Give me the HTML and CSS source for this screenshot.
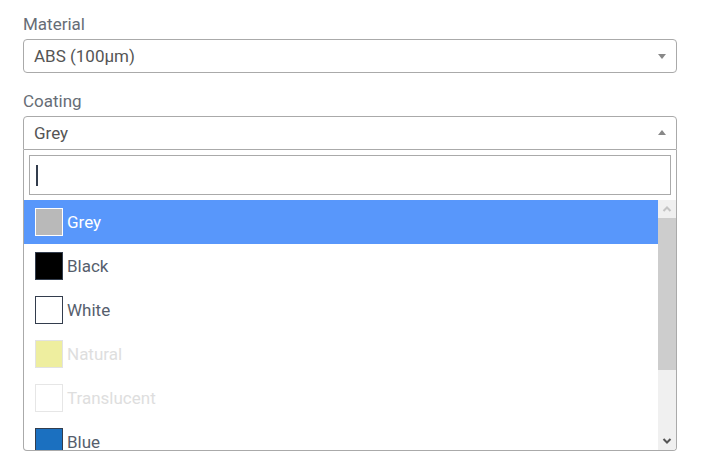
FILE: index.html
```html
<!DOCTYPE html>
<html>
<head>
<meta charset="utf-8">
<link rel="stylesheet" href="styles.css">
</head>
<body>
<div class="form">
  <div class="field">
    <label class="label">Material</label>
    <div class="select">
      <span class="value">ABS (100µm)</span>
      <span class="arrow down"></span>
    </div>
  </div>
  <div class="field">
    <label class="label">Coating</label>
    <div class="select open">
      <span class="value">Grey</span>
      <span class="arrow up"></span>
    </div>
    <div class="dropdown">
      <div class="search"><span class="caret"></span></div>
      <div class="results">
        <ul class="options">
          <li class="option active"><span class="swatch sw-grey"></span>Grey</li>
          <li class="option"><span class="swatch sw-black"></span>Black</li>
          <li class="option"><span class="swatch sw-white"></span>White</li>
          <li class="option disabled"><span class="swatch sw-natural"></span>Natural</li>
          <li class="option disabled"><span class="swatch sw-trans"></span>Translucent</li>
          <li class="option"><span class="swatch sw-blue"></span>Blue</li>
        </ul>
        <div class="scrollbar">
          <div class="sb-btn"><svg width="10" height="6" viewBox="0 0 10 6"><path d="M1.5 5 L5 1.5 L8.5 5" fill="none" stroke="#c4c4c4" stroke-width="2"/></svg></div>
          <div class="sb-thumb"></div>
          <div class="sb-track"></div>
          <div class="sb-btn"><svg width="10" height="6" viewBox="0 0 10 6"><path d="M1.5 1 L5 4.5 L8.5 1" fill="none" stroke="#555" stroke-width="2"/></svg></div>
        </div>
      </div>
    </div>
  </div>
</div>
</body>
</html>
```
FILE: styles.css
```css
* { box-sizing: border-box; }
html, body { margin: 0; padding: 0; background: #fff; }
body { font-family: Roboto, "Liberation Sans", sans-serif; font-size: 17px; font-weight: 400; overflow: hidden; }
.form { padding: 14px 28px 0 23px; width: 705px; display: flex; flex-direction: column; gap: 18px; }
.field { display: flex; flex-direction: column; }
.label { display: block; color: #676d76; line-height: 20px; margin-bottom: 5px; }
.select {
  position: relative;
  height: 34px;
  border: 1px solid #aaa;
  border-radius: 4px;
  display: flex;
  align-items: center;
  padding-left: 10px;
  color: #555;
}
.select.open { border-radius: 4px 4px 0 0; }
.value { line-height: 20px; }
.arrow { position: absolute; right: 10px; top: 50%; width: 0; height: 0; border-left: 4.5px solid transparent; border-right: 4.5px solid transparent; }
.arrow.down { border-top: 5px solid #888; margin-top: -2px; }
.arrow.up { border-bottom: 5px solid #888; margin-top: -3px; }
.dropdown {
  border: 1px solid #aaa;
  border-top: none;
  border-radius: 0 0 4px 4px;
  overflow: hidden;
}
.search { margin: 5px; height: 40px; border: 1px solid #aaa; display: flex; align-items: center; padding-left: 6px; }
.caret { width: 2px; height: 21px; background: #333d4d; }
.results { display: flex; height: 250px; overflow: hidden; }
.options { list-style: none; margin: 0; padding: 0; flex: 1; }
.option { height: 44px; display: flex; align-items: center; padding-left: 11px; color: #565e6d; }
.option.active { background: #5897fb; color: #fff; }
.option.disabled { color: #dedede; }
.swatch { width: 28px; height: 28px; border: 1px solid currentColor; margin-right: 4px; flex: none; }
.sw-grey { background: #b9b9b9; }
.sw-black { background: #000; color: #333d4d; }
.sw-white { background: #fff; }
.sw-natural { background: #eeee9f; border-color: #e2e2e2; }
.sw-trans { background: #fff; border-color: #e6e6e6; }
.sw-blue { background: #1b70c0; border-color: #333d4d; }
.option:not(.active) .swatch.sw-white { border-color: #333d4d; }
.scrollbar { width: 18px; flex: none; display: flex; flex-direction: column; background: #f0f0f0; }
.sb-btn { height: 18px; display: flex; align-items: center; justify-content: center; }
.sb-thumb { height: 152px; background: #cdcdcd; }
.sb-track { flex: 1; }
```
